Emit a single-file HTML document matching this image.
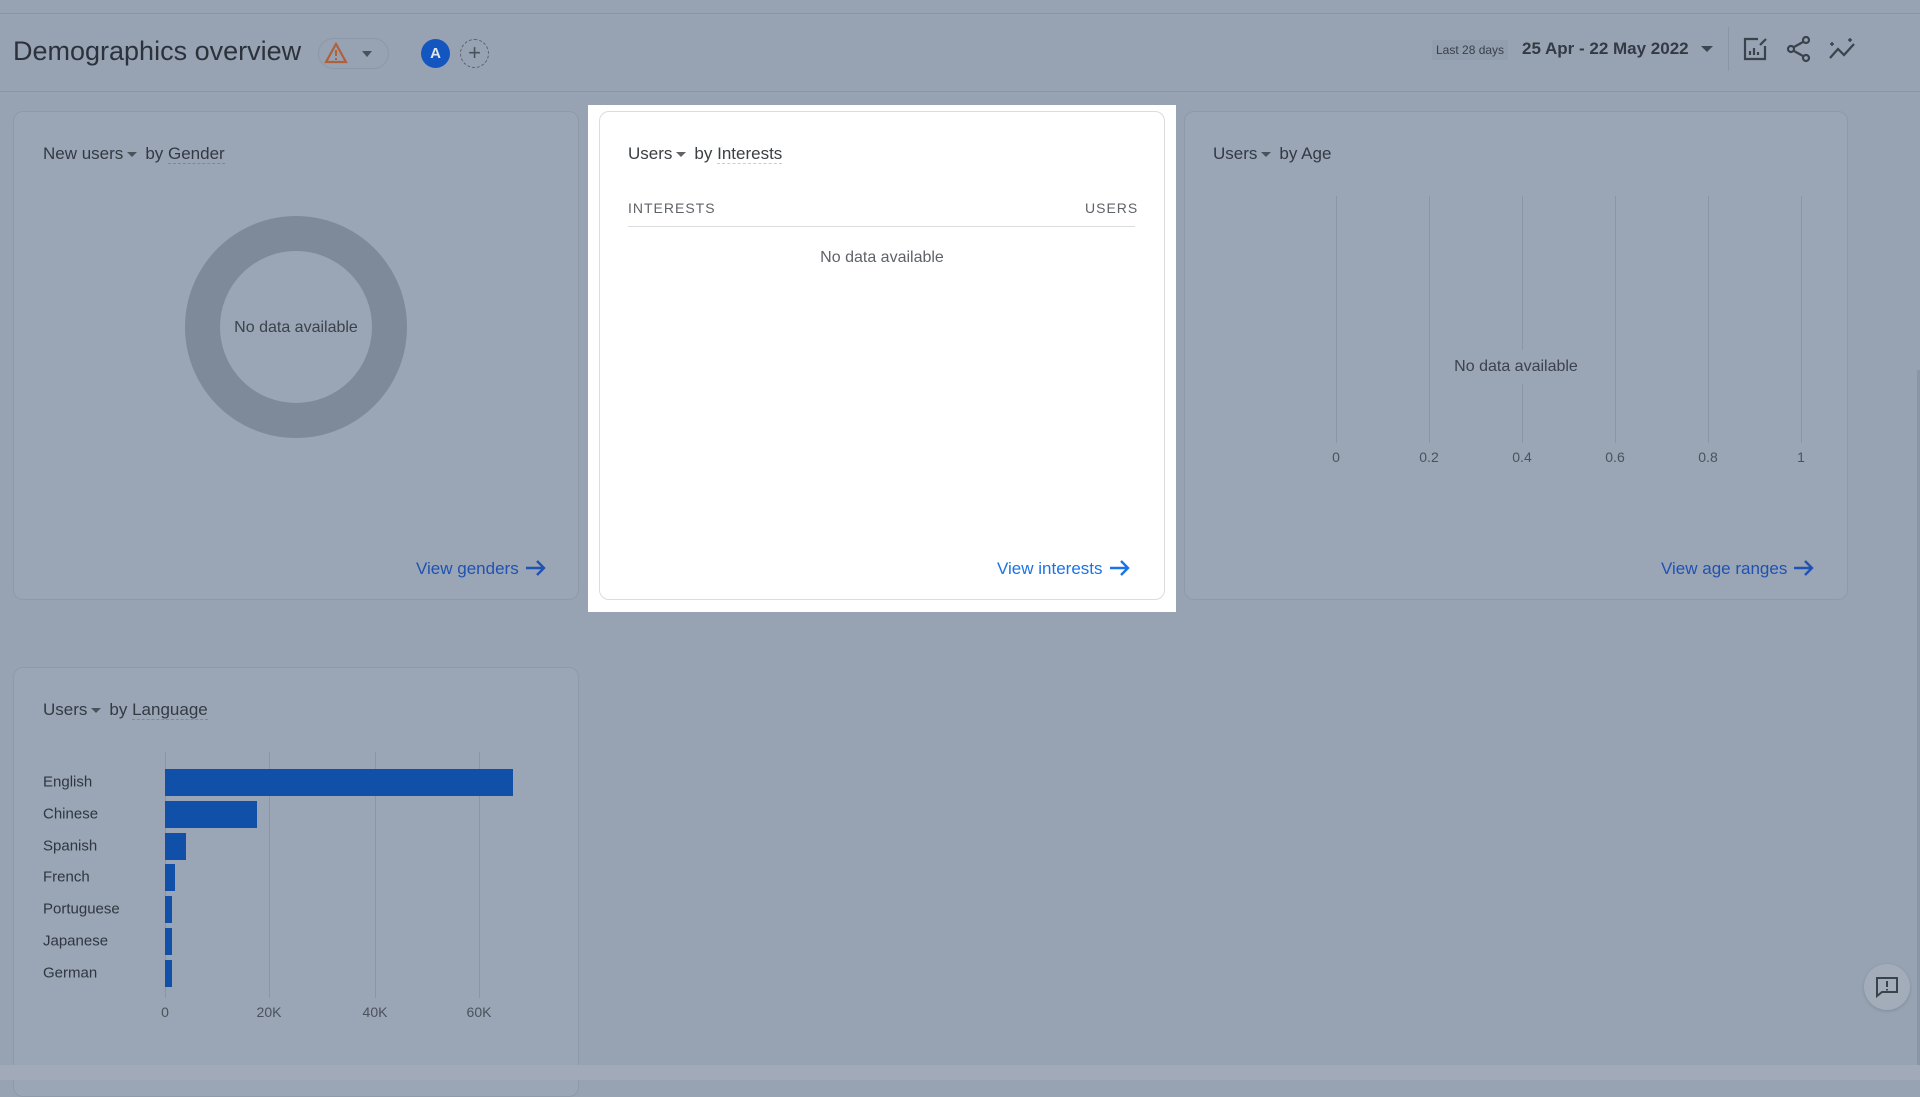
<!DOCTYPE html>
<html><head><meta charset="utf-8"><style>
*{box-sizing:border-box;margin:0;padding:0}
body{width:1920px;height:1080px;background:#97a3b2;font-family:"Liberation Sans",Arial,sans-serif;position:relative;overflow:hidden;color:#2f3640}
.abs{position:absolute}
.card{position:absolute;background:#9aa6b5;border:1px solid #8e9aa9;border-radius:10px}
.t{position:absolute;font-size:17px;color:#333a44;white-space:nowrap}
.t u{text-decoration:none;border-bottom:1px dashed #7d8896}
.caret{display:inline-block;width:0;height:0;border-left:5px solid transparent;border-right:5px solid transparent;border-top:5px solid #4a525c;vertical-align:middle;margin:0 8px 0 4px}
.link{position:absolute;font-size:17px;color:#1f52b3;white-space:nowrap}
.link svg{vertical-align:-4px;margin-left:6px}
.nd{position:absolute;font-size:16px;color:#3b424c;white-space:nowrap}
.gl{position:absolute;width:1px;background:#8a96a5}
.ax{position:absolute;font-size:14px;color:#4a525c;transform:translateX(-50%)}
.bar{position:absolute;left:165px;height:27px;background:#1150a8}
.lab{position:absolute;left:43px;font-size:15px;color:#2f3640;transform:translateY(-50%)}
</style></head><body>
<div class="abs" style="left:0;top:13px;width:1920px;height:1px;background:#8a96a5"></div>
<div class="abs" style="left:0;top:91px;width:1920px;height:1px;background:#8a96a5"></div>

<div class="t" style="left:13px;top:36px;font-size:27px;color:#2b323c">Demographics overview</div>
<div class="abs" style="left:318px;top:38px;width:71px;height:31px;border:1px solid #8c98a7;border-radius:16px"></div>
<svg class="abs" style="left:324px;top:42px" width="24" height="22" viewBox="0 0 24 22"><path d="M12 2 L22 20 H2 Z" fill="none" stroke="#b0603a" stroke-width="2.2"/><path d="M12 8v6M12 16v2" stroke="#b0603a" stroke-width="2"/></svg>
<div class="abs" style="left:362px;top:51px;border-left:5px solid transparent;border-right:5px solid transparent;border-top:6px solid #4a525c"></div>
<div class="abs" style="left:421px;top:39px;width:29px;height:29px;border-radius:50%;background:#1456c0;color:#dfe6f0;font-size:15px;font-weight:bold;text-align:center;line-height:29px">A</div>
<div class="abs" style="left:460px;top:39px;width:29px;height:29px;border-radius:50%;border:1px dashed #5b6370;color:#4a525c;font-size:22px;text-align:center;line-height:26px">+</div>

<div class="abs" style="left:1432px;top:40px;height:20px;padding:0 4px;background:#929eae;font-size:12px;color:#39404a;line-height:20px">Last 28 days</div>
<div class="t" style="left:1522px;top:39px;font-size:17px;color:#333a44;font-weight:bold">25 Apr - 22 May 2022</div>
<div class="abs" style="left:1701px;top:46px;border-left:6px solid transparent;border-right:6px solid transparent;border-top:6px solid #3e4650"></div>
<div class="abs" style="left:1728px;top:27px;width:1px;height:44px;background:#8a96a5"></div>
<svg class="abs" style="left:1742px;top:36px" width="26" height="26" viewBox="0 0 26 26" fill="none" stroke="#3a424c" stroke-width="2.2"><path d="M16 3H3v20h20V10"/><path d="M8 19v-4M12 19v-7M16 19v-3"/><path d="M18 9l6-6"/></svg>
<svg class="abs" style="left:1786px;top:35px" width="26" height="28" viewBox="0 0 26 28" fill="none" stroke="#3a424c" stroke-width="2.2"><circle cx="20" cy="5" r="3"/><circle cx="5" cy="14" r="3"/><circle cx="20" cy="23" r="3"/><path d="M8 12l9-5M8 16l9 5"/></svg>
<svg class="abs" style="left:1828px;top:36px" width="30" height="26" viewBox="0 0 30 26" fill="none" stroke="#3a424c" stroke-width="2.2"><path d="M2 22l8-9 6 6 10-11"/><path d="M4 6v4M2 8h4M22 2v4M20 4h4" stroke-width="1.5"/></svg>

<!-- Card 1 -->
<div class="card" style="left:13px;top:111px;width:566px;height:489px"></div>
<div class="t" style="left:43px;top:144px">New users<span class="caret"></span>by <u>Gender</u></div>
<div class="abs" style="left:185px;top:216px;width:222px;height:222px;border-radius:50%;border:35px solid #7e8a99"></div>
<div class="nd" style="left:296px;top:319px;transform:translateX(-50%)">No data available</div>
<div class="link" style="left:416px;top:558px">View genders<svg width="22" height="20" viewBox="0 0 22 20" fill="none" stroke="#1f52b3" stroke-width="2.4"><path d="M1 10h18M12 3l7 7-7 7"/></svg></div>

<!-- Card 2 highlight -->
<div class="abs" style="left:588px;top:105px;width:588px;height:507px;background:#fff"></div>
<div class="abs" style="left:599px;top:111px;width:566px;height:489px;border:1px solid #dadce0;border-radius:10px;background:#fff"></div>
<div class="t" style="left:628px;top:144px;color:#3c4043">Users<span class="caret" style="border-top-color:#5f6368"></span>by <u style="border-color:#ccc">Interests</u></div>
<div class="abs" style="left:628px;top:200px;font-size:14px;letter-spacing:1px;color:#5f6368">INTERESTS</div>
<div class="abs" style="left:1085px;top:200px;font-size:14px;letter-spacing:1px;color:#5f6368">USERS</div>
<div class="abs" style="left:628px;top:226px;width:507px;height:1px;background:#dadce0"></div>
<div class="nd" style="left:882px;top:249px;transform:translateX(-50%);color:#5f6368">No data available</div>
<div class="link" style="left:997px;top:558px;color:#1a73e8">View interests<svg width="22" height="20" viewBox="0 0 22 20" fill="none" stroke="#1a73e8" stroke-width="2.4"><path d="M1 10h18M12 3l7 7-7 7"/></svg></div>

<!-- Card 3 -->
<div class="card" style="left:1184px;top:111px;width:664px;height:489px"></div>
<div class="t" style="left:1213px;top:144px">Users<span class="caret"></span>by Age</div>
<div class="gl" style="left:1336px;top:196px;height:247px"></div>
<div class="gl" style="left:1429px;top:196px;height:247px"></div>
<div class="gl" style="left:1522px;top:196px;height:247px"></div>
<div class="gl" style="left:1615px;top:196px;height:247px"></div>
<div class="gl" style="left:1708px;top:196px;height:247px"></div>
<div class="gl" style="left:1801px;top:196px;height:247px"></div>
<div class="nd" style="left:1516px;top:350px;transform:translateX(-50%);background:#9aa6b5;padding:8px 4px">No data available</div>
<div class="ax" style="left:1336px;top:449px">0</div>
<div class="ax" style="left:1429px;top:449px">0.2</div>
<div class="ax" style="left:1522px;top:449px">0.4</div>
<div class="ax" style="left:1615px;top:449px">0.6</div>
<div class="ax" style="left:1708px;top:449px">0.8</div>
<div class="ax" style="left:1801px;top:449px">1</div>
<div class="link" style="left:1661px;top:558px">View age ranges<svg width="22" height="20" viewBox="0 0 22 20" fill="none" stroke="#1f52b3" stroke-width="2.4"><path d="M1 10h18M12 3l7 7-7 7"/></svg></div>

<!-- Card 4 -->
<div class="card" style="left:13px;top:667px;width:566px;height:430px"></div>
<div class="t" style="left:43px;top:700px">Users<span class="caret"></span>by <u>Language</u></div>
<div class="gl" style="left:165px;top:752px;height:246px"></div>
<div class="gl" style="left:269px;top:752px;height:246px"></div>
<div class="gl" style="left:375px;top:752px;height:246px"></div>
<div class="gl" style="left:479px;top:752px;height:246px"></div>
<div class="bar" style="top:769px;width:348px"></div>
<div class="bar" style="top:801px;width:92px"></div>
<div class="bar" style="top:833px;width:21px"></div>
<div class="bar" style="top:864px;width:10px"></div>
<div class="bar" style="top:896px;width:7px"></div>
<div class="bar" style="top:928px;width:7px"></div>
<div class="bar" style="top:960px;width:7px"></div>
<div class="lab" style="top:782px">English</div>
<div class="lab" style="top:814px">Chinese</div>
<div class="lab" style="top:846px">Spanish</div>
<div class="lab" style="top:877px">French</div>
<div class="lab" style="top:909px">Portuguese</div>
<div class="lab" style="top:941px">Japanese</div>
<div class="lab" style="top:973px">German</div>
<div class="ax" style="left:165px;top:1004px">0</div>
<div class="ax" style="left:269px;top:1004px">20K</div>
<div class="ax" style="left:375px;top:1004px">40K</div>
<div class="ax" style="left:479px;top:1004px">60K</div>

<div class="abs" style="left:0;top:1065px;width:1920px;height:15px;background:#a0aab8"></div>

<div class="abs" style="left:1864px;top:964px;width:46px;height:46px;border-radius:50%;background:#a3adba;box-shadow:0 1px 3px #7e8a99"></div>
<svg class="abs" style="left:1875px;top:976px" width="24" height="22" viewBox="0 0 24 22" fill="none" stroke="#3a424c" stroke-width="2"><path d="M2 2h20v14H7l-5 4z"/><path d="M12 5v6M12 13v1.5"/></svg>
<div class="abs" style="left:1917px;top:370px;width:3px;height:695px;background:#8a96a5"></div>
</body></html>
